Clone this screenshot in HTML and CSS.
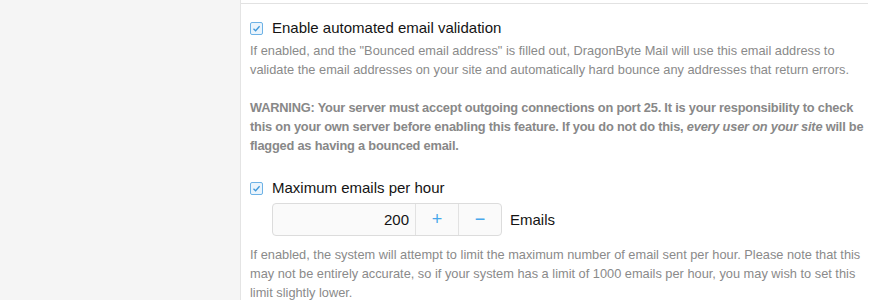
FILE: index.html
```html
<!DOCTYPE html>
<html>
    <head>
        <title>Email Options</title>
        <link rel="stylesheet" href="styles.css">
    </head>
    <body>
      <div class="page">
        <div class="sidebar"></div>
        <div class="main">
          <div class="topRule"></div>

          <div class="option">
            <label class="checkRow">
              <span class="checkbox">
                <svg width="13" height="13" viewBox="0 0 13 13"><path d="M3.5 6.8 L5.6 8.8 L9.6 4.2" fill="none" stroke="#3d97d9" stroke-width="1.3"/></svg>
              </span>
              Enable automated email validation
            </label>
            <div class="explain">
              If enabled, and the "Bounced email address" is filled out, DragonByte Mail will use this email address to validate the email addresses on your site and automatically hard bounce any addresses that return errors.<br><br>
              <b>WARNING: Your server must accept outgoing connections on port 25. It is your responsibility to check this on your own server before enabling this feature. If you do not do this, <i>every user on your site</i> will be flagged as having a bounced email.</b>
            </div>
          </div>

          <div class="option second">
            <label class="checkRow">
              <span class="checkbox">
                <svg width="13" height="13" viewBox="0 0 13 13"><path d="M3.5 6.8 L5.6 8.8 L9.6 4.2" fill="none" stroke="#3d97d9" stroke-width="1.3"/></svg>
              </span>
              Maximum emails per hour
            </label>
            <div class="spinRow">
              <div class="inputGroup">
                <span class="numberBox">200</span>
                <span class="spinButton">+</span>
                <span class="spinButton">&minus;</span>
              </div>
              <span class="unit">Emails</span>
            </div>
            <div class="explain lower">
              If enabled, the system will attempt to limit the maximum number of email sent per hour. Please note that this may not be entirely accurate, so if your system has a limit of 1000 emails per hour, you may wish to set this limit slightly lower.
            </div>
          </div>
        </div>
      </div>
    </body>
</html>
```

FILE: styles.css
```css
* {
  box-sizing: border-box;
}

body {
  margin: 0;
  font-family: "Liberation Sans", Arial, sans-serif;
  background: #fff;
}

/* Two columns: grey nav area and white form area */
.page {
  display: flex;
  height: 300px;
  overflow: hidden;
}

.sidebar {
  width: 241px;
  flex-shrink: 0;
  background: #f5f5f5;
  border-right: 1px solid #e4e4e4;
}

.main {
  flex: 1;
  padding: 0 5px 0 0;
}

.topRule {
  height: 4px;
  border-bottom: 1px solid #e2e2e2;
}

.option {
  padding: 17px 0 0 9px;
}

.option.second {
  padding-top: 26px;
}

/* Checkbox with its label */
.checkRow {
  display: flex;
  align-items: center;
  font-size: 15px;
  color: #141414;
  height: 14px;
  line-height: 14px;
}

.checkbox {
  width: 13px;
  height: 13px;
  margin-right: 9px;
  border: 1px solid #6db2e6;
  border-radius: 2px;
  background: #eaf4fc;
  display: flex;
}

.checkbox svg {
  margin: -1px;
}

.explain {
  margin-top: 6px;
  font-size: 12.8px;
  line-height: 19px;
  color: #8a8a8a;
}

.explain.lower {
  margin-top: 9px;
}

.explain b {
  color: #888;
  letter-spacing: -0.2px;
}

/* The number box with its + and - buttons */
.spinRow {
  display: flex;
  align-items: center;
  margin: 8px 0 0 22px;
}

.inputGroup {
  display: flex;
  width: 230px;
  height: 33px;
  border: 1px solid #dcdcdc;
  border-radius: 4px;
  background: #fafafa;
}

.numberBox {
  flex: 1;
  text-align: right;
  padding-right: 6px;
  font-size: 15px;
  line-height: 31px;
  color: #141414;
}

.spinButton {
  width: 43px;
  border-left: 1px solid #e2e2e2;
  text-align: center;
  font-size: 18px;
  line-height: 30px;
  color: #47a7eb;
}

.unit {
  margin-left: 8px;
  font-size: 15px;
  color: #141414;
}
```
